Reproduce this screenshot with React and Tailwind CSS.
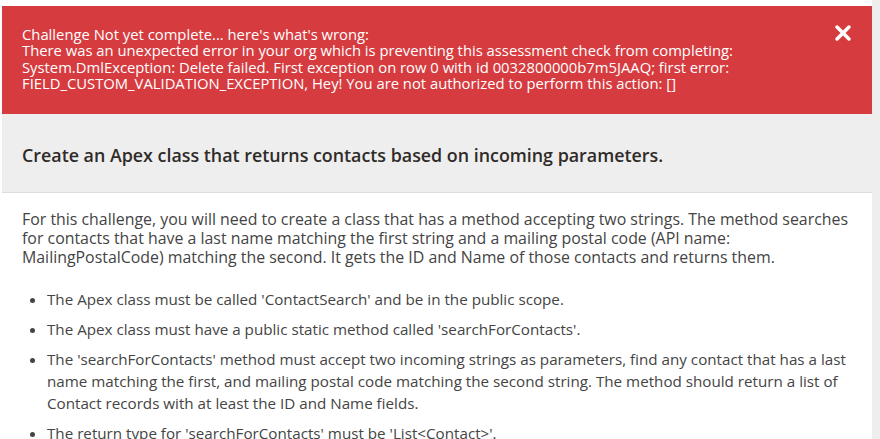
import { X } from "lucide-react";

const bannerLines = [
  "Challenge Not yet complete... here's what's wrong:",
  "There was an unexpected error in your org which is preventing this assessment check from completing:",
  "System.DmlException: Delete failed. First exception on row 0 with id 0032800000b7m5JAAQ; first error:",
  "FIELD_CUSTOM_VALIDATION_EXCEPTION, Hey! You are not authorized to perform this action: []",
];

const introLines = [
  "For this challenge, you will need to create a class that has a method accepting two strings. The method searches",
  "for contacts that have a last name matching the first string and a mailing postal code (API name:",
  "MailingPostalCode) matching the second. It gets the ID and Name of those contacts and returns them.",
];

const bullets = [
  ["The Apex class must be called 'ContactSearch' and be in the public scope."],
  ["The Apex class must have a public static method called 'searchForContacts'."],
  [
    "The 'searchForContacts' method must accept two incoming strings as parameters, find any contact that has a last",
    "name matching the first, and mailing postal code matching the second string. The method should return a list of",
    "Contact records with at least the ID and Name fields.",
  ],
  ["The return type for 'searchForContacts' must be 'List<Contact>'."],
];

const App = () => {
  return (
    <div
      className="flex h-[439px] w-[880px] overflow-hidden bg-white"
      style={{ fontFamily: "'Open Sans', 'Noto Sans', sans-serif" }}
    >
      <div className="w-[870px] ml-[2px] pt-[6px]">
        {/* Error banner */}
        <div className="relative bg-[#d63c3f] text-white text-[14.8px] leading-[16.3px] pt-[20px] pb-[23px] pl-[20px]">
          {bannerLines.map((line, i) => (
            <div key={i} className="whitespace-nowrap">
              {line}
            </div>
          ))}
          <button className="absolute right-[17px] top-[15px] text-white">
            <X size={24} strokeWidth={3.5} />
          </button>
        </div>

        {/* Challenge title */}
        <div className="bg-[#eeeeee] border-b border-[#dddddd] pt-[31px] pb-[27px] pl-[20px]">
          <h2 className="text-[17.85px] leading-[20px] font-semibold text-[#2f2b28] whitespace-nowrap">
            Create an Apex class that returns contacts based on incoming parameters.
          </h2>
        </div>

        {/* Challenge body */}
        <div className="pt-[17px] pl-[20px] text-[#444444]">
          <div className="text-[15.9px] leading-[19px]">
            {introLines.map((line, i) => (
              <div key={i} className="whitespace-nowrap">
                {line}
              </div>
            ))}
          </div>
          <ul className="mt-[21px] pl-[25px] list-disc text-[15.2px] leading-[22px] flex flex-col gap-[8px]">
            {bullets.map((item, i) => (
              <li key={i}>
                {item.map((line, j) => (
                  <div key={j} className="whitespace-nowrap">
                    {line}
                  </div>
                ))}
              </li>
            ))}
          </ul>
        </div>
      </div>
      <div className="flex-1 bg-[#eeeeee]" />
    </div>
  );
};

export default App;
